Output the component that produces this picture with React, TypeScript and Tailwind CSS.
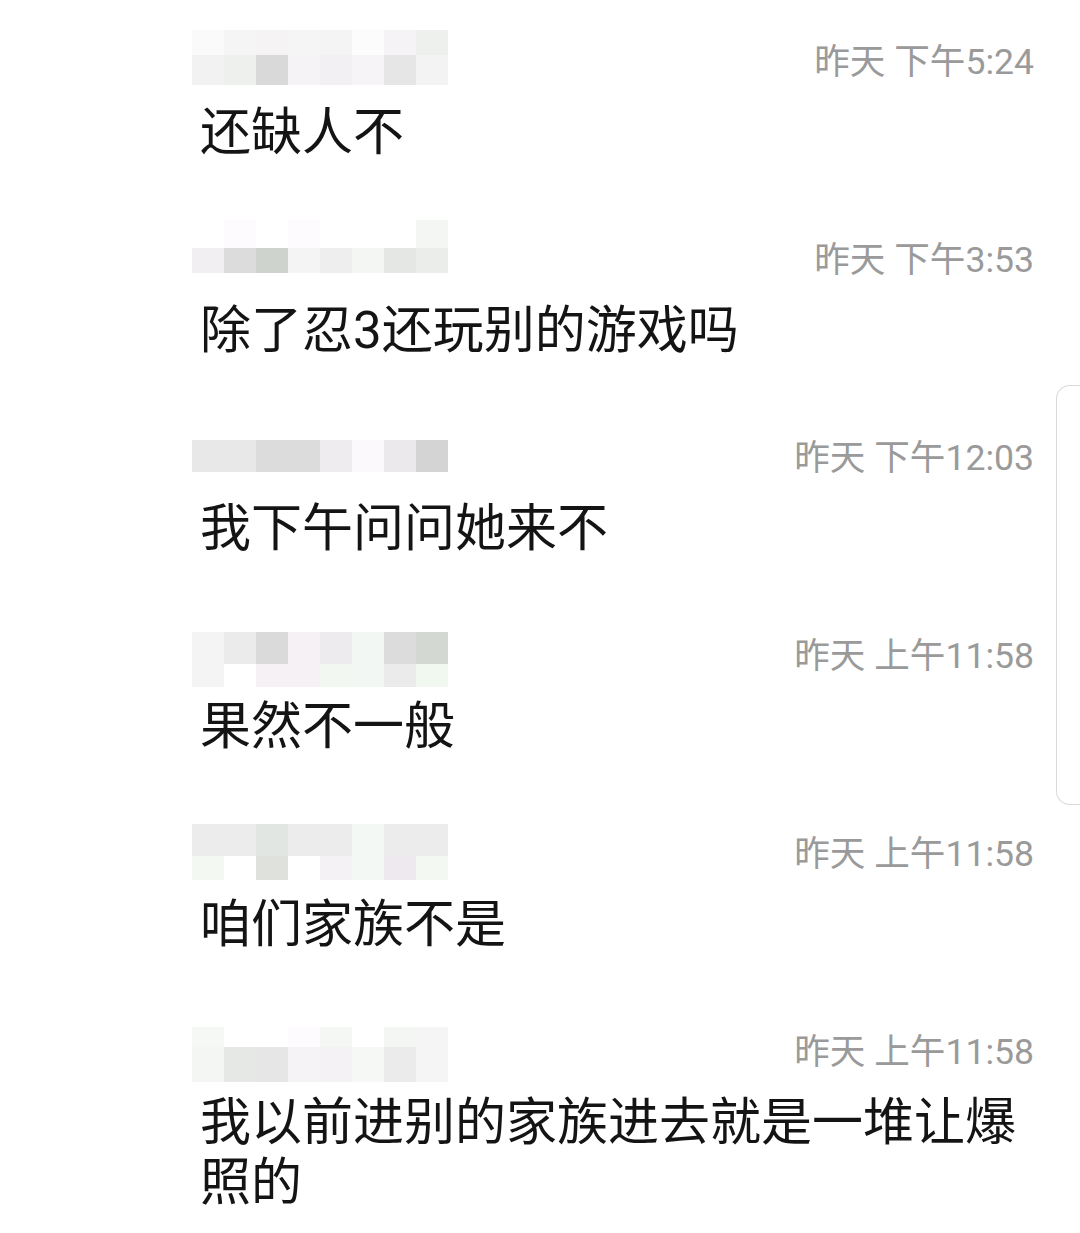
type MosaicRow = { h: string; cells: string[] };

interface Message {
  id: number;
  time: string;
  text: string;
  mosaicTop: string;
  rows: MosaicRow[];
}

const messages: Message[] = [
  {
    id: 1,
    time: '昨天 下午5:24',
    text: '还缺人不',
    mosaicTop: 'mt-[4px]',
    rows: [
      { h: 'h-[25px]', cells: ['bg-[#fafafa]', 'bg-[#f4f5f4]', 'bg-[#f5f3f4]', 'bg-[#f6f5f6]', 'bg-[#f4f4f4]', 'bg-[#fcfcfc]', 'bg-[#f5f3f5]', 'bg-[#eef0ee]'] },
      { h: 'h-[30px]', cells: ['bg-[#f2f2f2]', 'bg-[#eef0ee]', 'bg-[#d9d9d9]', 'bg-[#f5f3f5]', 'bg-[#f2f0f2]', 'bg-[#f6f4f6]', 'bg-[#e6e6e6]', 'bg-[#f3f3f3]'] },
    ],
  },
  {
    id: 2,
    time: '昨天 下午3:53',
    text: '除了忍3还玩别的游戏吗',
    mosaicTop: '-mt-[4px]',
    rows: [
      { h: 'h-[28px]', cells: ['bg-white', 'bg-[#fdfbfd]', 'bg-white', 'bg-[#fdfbfd]', 'bg-white', 'bg-white', 'bg-white', 'bg-[#f4f6f3]'] },
      { h: 'h-[25px]', cells: ['bg-[#f1eff1]', 'bg-[#dcdcdc]', 'bg-[#ced3cd]', 'bg-[#f4f4f4]', 'bg-[#eeeeee]', 'bg-[#f3f6f2]', 'bg-[#e4e7e3]', 'bg-[#eaedea]'] },
    ],
  },
  {
    id: 3,
    time: '昨天 下午12:03',
    text: '我下午问问她来不',
    mosaicTop: 'mt-[18px]',
    rows: [
      { h: 'h-[32px]', cells: ['bg-[#e8e8e8]', 'bg-[#e8e8e8]', 'bg-[#dcdcdc]', 'bg-[#dcdcdc]', 'bg-[#efecef]', 'bg-[#fbf9fb]', 'bg-[#ece9ec]', 'bg-[#d4d4d4]'] },
    ],
  },
  {
    id: 4,
    time: '昨天 上午11:58',
    text: '果然不一般',
    mosaicTop: 'mt-[12px]',
    rows: [
      { h: 'h-[32px]', cells: ['bg-[#f4f4f4]', 'bg-[#ebebeb]', 'bg-[#dadada]', 'bg-[#f5f1f5]', 'bg-[#eeebee]', 'bg-[#f3f7f3]', 'bg-[#dcdcdc]', 'bg-[#d3d8d2]'] },
      { h: 'h-[23px]', cells: ['bg-[#f4f4f4]', 'bg-white', 'bg-[#f5f1f5]', 'bg-[#f5f1f5]', 'bg-[#f3f7f1]', 'bg-[#f3f7f3]', 'bg-[#ebebeb]', 'bg-[#f1f8f0]'] },
    ],
  },
  {
    id: 5,
    time: '昨天 上午11:58',
    text: '咱们家族不是',
    mosaicTop: 'mt-[6px]',
    rows: [
      { h: 'h-[32px]', cells: ['bg-[#ececec]', 'bg-[#ececec]', 'bg-[#e2e6e2]', 'bg-[#ececec]', 'bg-[#ececec]', 'bg-[#f4f8f4]', 'bg-[#ececec]', 'bg-[#ececec]'] },
      { h: 'h-[24px]', cells: ['bg-[#f3f8f2]', 'bg-white', 'bg-[#dfe2dc]', 'bg-white', 'bg-[#f5f2f6]', 'bg-[#f4f8f4]', 'bg-[#ede9ee]', 'bg-[#f4f8f3]'] },
    ],
  },
  {
    id: 6,
    time: '昨天 上午11:58',
    text: '我以前进别的家族进去就是一堆让爆照的',
    mosaicTop: 'mt-[11px]',
    rows: [
      { h: 'h-[20px]', cells: ['bg-[#f5f8f5]', 'bg-white', 'bg-white', 'bg-[#fdfbfd]', 'bg-[#f5f7f4]', 'bg-white', 'bg-[#f4f6f3]', 'bg-[#f5f5f5]'] },
      { h: 'h-[35px]', cells: ['bg-[#f3f6f3]', 'bg-[#e6e8e6]', 'bg-[#e6e6e6]', 'bg-[#f6f3f6]', 'bg-[#f5f2f5]', 'bg-[#f6f8f6]', 'bg-[#ebebeb]', 'bg-[#f5f5f5]'] },
    ],
  },
];

function Mosaic({ rows, top }: { rows: MosaicRow[]; top: string }) {
  return (
    <div className={`flex flex-col self-start ${top}`}>
      {rows.map((row, i) => (
        <div key={i} className={`flex ${row.h}`}>
          {row.cells.map((c, j) => (
            <div key={j} className={`w-[32px] h-full ${c}`} />
          ))}
        </div>
      ))}
    </div>
  );
}

export default function App() {
  return (
    <div
      className="relative w-full h-[1233px] bg-white overflow-hidden pt-[26px] pl-[192px] pr-[46px]"
      style={{ fontFamily: 'Roboto, "Noto Sans CJK SC", sans-serif' }}
    >
      {messages.map((m) => (
        <div key={m.id} className="flex flex-col pb-[61px]">
          <div className="flex items-center justify-between h-[72px]">
            <Mosaic rows={m.rows} top={m.mosaicTop} />
            <span className="text-[35.6px] leading-[40px] text-[#9a9a9a] whitespace-nowrap">{m.time}</span>
          </div>
          <p className="mt-[5px] ml-[8px] text-[51px] leading-[60px] text-[#141414]">{m.text}</p>
        </div>
      ))}

      {/* side scroll handle */}
      <div className="absolute right-0 top-[385px] w-[24px] h-[420px] bg-white border border-r-0 border-[#d9d9d9] rounded-l-[14px]" />
    </div>
  );
}
